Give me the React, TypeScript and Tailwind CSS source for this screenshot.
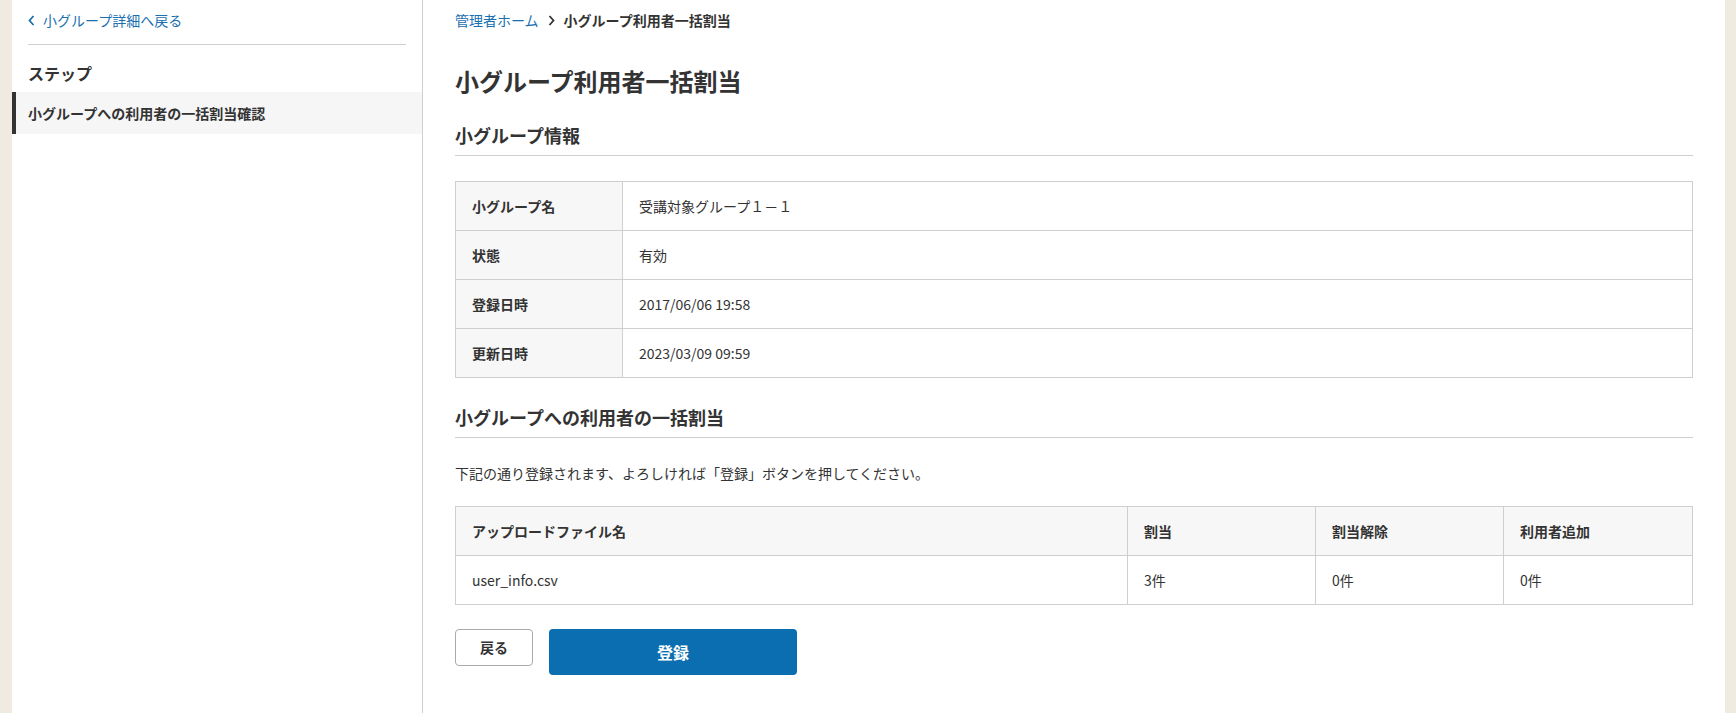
import React from 'react';

const INFO_ROWS = [
  { label: '小グループ名', value: '受講対象グループ１－１' },
  { label: '状態', value: '有効' },
  { label: '登録日時', value: '2017/06/06 19:58' },
  { label: '更新日時', value: '2023/03/09 09:59' },
];

function Chevron({ dir }: { dir: 'left' | 'right' }) {
  return (
    <svg width="7" height="11" viewBox="0 0 7 11" fill="none" stroke="currentColor" strokeWidth="1.8">
      {dir === 'left' ? <path d="M5.5 1 L1.5 5.5 L5.5 10" /> : <path d="M1.5 1 L5.5 5.5 L1.5 10" />}
    </svg>
  );
}

export default function App() {
  return (
    <div
      className="min-h-screen bg-[#f0ebe1] px-[12px] text-[#333] text-[14px]"
      style={{ fontFamily: '"Noto Sans CJK JP", "Noto Sans", sans-serif' }}
    >
      <div className="flex min-h-screen bg-white w-[1713px]">
        {/* Sidebar */}
        <aside className="w-[411px] shrink-0 border-r border-[#cfcfcf]">
          <div className="px-4 pt-[10px]">
            <a href="#" className="flex items-center gap-[8px] text-[#1a6fb0] leading-[20px]">
              <Chevron dir="left" />
              小グループ詳細へ戻る
            </a>
            <div className="mt-[14px] border-t border-[#cfcfcf]" />
            <h2 className="mt-[16px] text-[16px] font-bold leading-[24px]">ステップ</h2>
          </div>
          <div className="mt-[7px] border-l-4 border-[#333] bg-[#f6f6f6] pl-3 py-[11px] font-bold leading-[20px]">
            小グループへの利用者の一括割当確認
          </div>
        </aside>

        {/* Main */}
        <main className="flex-1 px-8 pt-[10px] pb-10">
          <nav className="flex items-center gap-[9px] leading-[20px]">
            <a href="#" className="text-[#1a6fb0]">管理者ホーム</a>
            <Chevron dir="right" />
            <span className="font-bold">小グループ利用者一括割当</span>
          </nav>

          <h1 className="mt-[33px] text-[24px] font-bold leading-[36px]">小グループ利用者一括割当</h1>

          <h2 className="mt-[23px] border-b border-[#cfcfcf] pb-[6px] text-[18px] font-bold leading-[27px]">
            小グループ情報
          </h2>

          <table className="mt-[25px] w-full border-collapse border border-[#cfcfcf]">
            <tbody>
              {INFO_ROWS.map((r) => (
                <tr key={r.label}>
                  <th className="w-[167px] border border-[#cfcfcf] bg-[#f7f7f7] px-4 py-[14px] text-left font-bold leading-[20px]">
                    {r.label}
                  </th>
                  <td className="border border-[#cfcfcf] px-4 py-[14px] leading-[20px]">{r.value}</td>
                </tr>
              ))}
            </tbody>
          </table>

          <h2 className="mt-[26px] border-b border-[#cfcfcf] pb-[6px] text-[18px] font-bold leading-[27px]">
            小グループへの利用者の一括割当
          </h2>

          <p className="mt-[25px] leading-[20px]">
            下記の通り登録されます、よろしければ「登録」ボタンを押してください。
          </p>

          <table className="mt-[23px] w-full table-fixed border-collapse border border-[#cfcfcf]">
            <colgroup>
              <col />
              <col className="w-[188px]" />
              <col className="w-[188px]" />
              <col className="w-[189px]" />
            </colgroup>
            <thead>
              <tr className="bg-[#f7f7f7]">
                <th className="border border-[#cfcfcf] px-4 py-[14px] text-left font-bold leading-[20px]">アップロードファイル名</th>
                <th className="border border-[#cfcfcf] px-4 py-[14px] text-left font-bold leading-[20px]">割当</th>
                <th className="border border-[#cfcfcf] px-4 py-[14px] text-left font-bold leading-[20px]">割当解除</th>
                <th className="border border-[#cfcfcf] px-4 py-[14px] text-left font-bold leading-[20px]">利用者追加</th>
              </tr>
            </thead>
            <tbody>
              <tr>
                <td className="border border-[#cfcfcf] px-4 py-[14px] leading-[20px]">user_info.csv</td>
                <td className="border border-[#cfcfcf] px-4 py-[14px] leading-[20px]">3件</td>
                <td className="border border-[#cfcfcf] px-4 py-[14px] leading-[20px]">0件</td>
                <td className="border border-[#cfcfcf] px-4 py-[14px] leading-[20px]">0件</td>
              </tr>
            </tbody>
          </table>

          <div className="mt-[24px] flex items-start gap-4">
            <button
              type="button"
              className="h-[37px] w-[78px] rounded-[4px] border border-[#aaa] bg-white font-bold text-[#333]"
            >
              戻る
            </button>
            <button
              type="button"
              className="h-[46px] w-[248px] rounded-[4px] bg-[#0a6eb0] text-[16px] font-bold text-white"
            >
              登録
            </button>
          </div>
        </main>
      </div>
    </div>
  );
}
